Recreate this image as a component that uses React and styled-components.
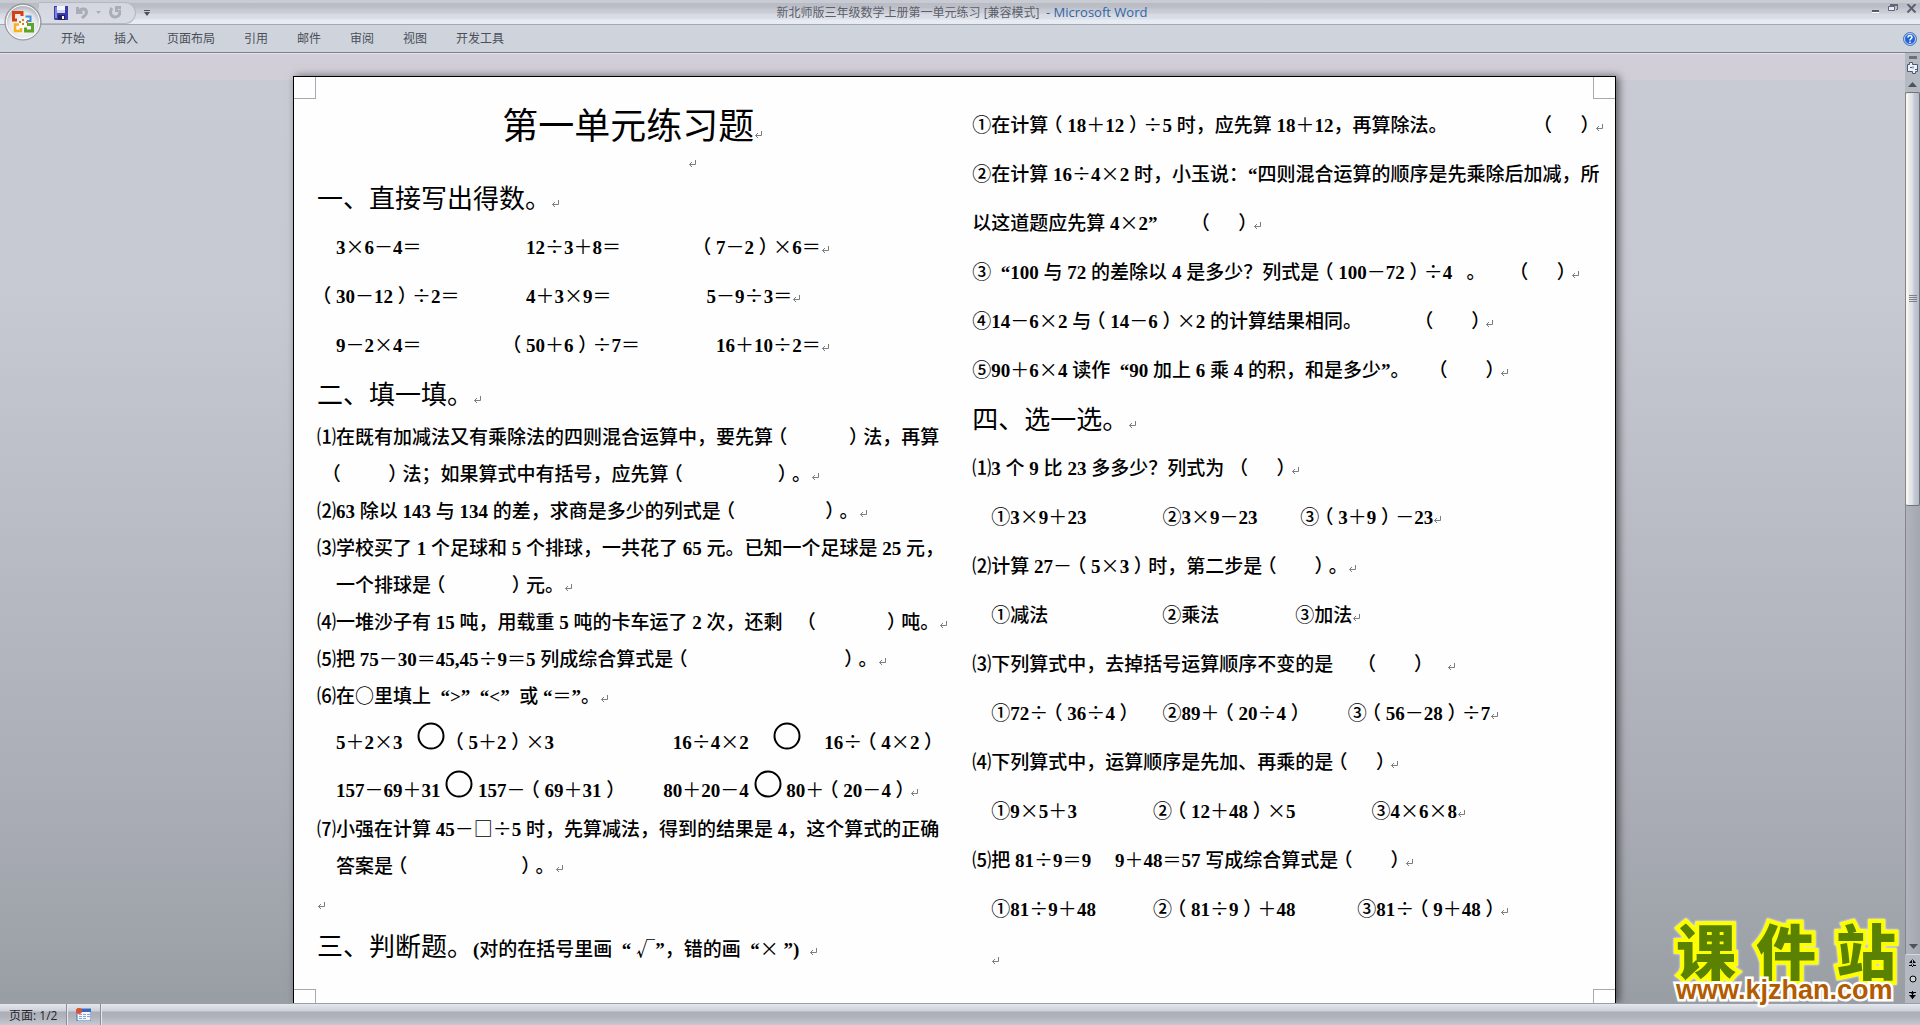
/**
*
* Word window with the maths worksheet
*
*/

import React from 'react';
import styled, { createGlobalStyle, css } from 'styled-components';

const cjk = '"Noto Sans CJK SC", sans-serif';
const latin = '"Liberation Serif", "Noto Sans CJK SC", serif';
const ui = '"Open Sans", "Noto Sans CJK SC", sans-serif';

const GlobalStyle = createGlobalStyle`
  *, *::before, *::after {
    box-sizing: border-box;
  }
  body {
    margin: 0;
    overflow: hidden;
  }
  button {
    padding: 0;
    border: 0;
    background: none;
    font: inherit;
    color: inherit;
  }
  svg {
    display: block;
  }
`

const Window = styled.div`
  position: relative;
  display: flex;
  flex-direction: column;
  height: 100vh;
  font-family: ${ui};
  font-size: 12px;
`

/* title bar and ribbon */

const TitleBar = styled.header`
  display: grid;
  grid-template-columns: 1fr auto 1fr;
  align-items: center;
  height: 25px;
  flex-shrink: 0;
  border-bottom: 1px solid #a4a9b3;
  background: linear-gradient(#c9cbd2 3px, #babcc5 3px, #bcbfc8 8px, #c5c8d0 9px, #cbced6 13px, #d6d9e0 14px, #dde0e7 19px, #e7ebf4 20px);
`

const QuickAccess = styled.div`
  display: flex;
  align-items: center;
  gap: 8px;
  height: 24px;
  padding-left: 39px;
`

const Pill = styled.div`
  display: flex;
  align-items: center;
  gap: 8px;
  height: 22px;
  width: 97px;
  padding-left: 15px;
  border: 1px solid #b4b8c2;
  border-left: 0;
  border-radius: 0 11px 11px 0;
  background: linear-gradient(#d3d6de, #d9dce4);
`

const WindowTitle = styled.div`
  padding-left: 4px;
  color: #5b5f6a;
  line-height: 24px;
  white-space: pre;
`

const AppName = styled.span`
  font-size: 13px;
  color: #2f66a6;
`

const WindowButtons = styled.div`
  display: flex;
  justify-content: flex-end;
  gap: 8px;
  padding-right: 3px;
  padding-bottom: 8px;
`

const Ribbon = styled.nav`
  display: flex;
  align-items: center;
  justify-content: space-between;
  height: 28px;
  flex-shrink: 0;
  padding: 0 3px 0 61px;
  border-bottom: 1px solid #7d8087;
  background: #cfd4dc;
`

const Tabs = styled.div`
  display: flex;
  gap: 29px;
`

const Tab = styled.button`
  line-height: 24px;
  color: #4a4e59;
`

const OfficeButton = styled.button`
  position: absolute;
  top: 3px;
  left: 4px;
`

/* document area */

const Body = styled.div`
  display: flex;
  flex: 1;
  min-height: 0;
`

const Workspace = styled.main`
  display: flex;
  justify-content: center;
  flex: 1;
  min-width: 0;
  padding: 23px 0 0 4px;
  overflow: hidden;
  background: linear-gradient(#e3e4e9 1px, #d1ced8 1px, #d1ced8 27px, #c8cbd3 27px, #c6c9d1 250px, #a9acb4 80%, #999ea4);
`

const Page = styled.article`
  position: relative;
  width: 100%;
  padding: 22px 13px 0 23px;
  overflow: hidden;
  border: 1px solid #000;
  border-bottom: 0;
  background: #fefefe;
`

const Shadow = styled.div`
  display: flex;
  width: min(1323px, 94%);
  box-shadow: 3px 0 8px rgba(0, 0, 0, 0.55);
`

const Corner = styled.i`
  position: absolute;
  width: 22px;
  height: ${p => p.$bottom ? '14px' : '22px'};
  border: 0 solid #a5a9b2;
  ${p => p.$bottom ? css`bottom: 0; border-top-width: 1px;` : css`top: 0; border-bottom-width: 1px;`}
  ${p => p.$right ? css`right: 0; border-left-width: 1px;` : css`left: 0; border-right-width: 1px;`}
`

const Columns = styled.div`
  display: grid;
  grid-template-columns: 1fr 1fr;
  gap: 24px;
`

const heights = {
  row: 49,
  ring: 48,
  tight: 37,
  blank: 24,
}

const Line = styled.p`
  margin: 0;
  height: ${p => heights[p.$kind || 'row']}px;
  line-height: ${p => p.$kind === 'ring' ? 56 : heights[p.$kind || 'row']}px;
  font-family: ${cjk};
  font-size: 19px;
  font-weight: 500;
  color: #000;
  white-space: pre;
  text-spacing-trim: space-all;
  text-align: ${p => p.$center ? 'center' : 'left'};
`

const Title = styled(Line).attrs({ as: 'h1' })`
  font-size: 36px;
  font-weight: 400;
  text-align: center;
`

const Heading = styled(Line).attrs({ as: 'h2' })`
  font-size: 26px;
  font-weight: 400;
`

const Note = styled.span`
  font-size: 19px;
  font-weight: 500;
`

const Latin = styled.span`
  font-family: ${latin};
  font-weight: 700;
`

const Sign = styled.span`
  font-weight: 400;
`

/* full width brackets are drawn in the middle of their cell */
const Bracket = styled.span`
  display: inline-block;
  width: 19px;
  text-align: center;
  font-feature-settings: "halt";
`

const Mark = styled.svg`
  display: inline-block;
  vertical-align: baseline;
`

const Ring = styled.svg`
  display: inline-block;
  vertical-align: -1px;
`

const Return = () => (
  <Mark width="9" height="8" viewBox="0 0 9 8" fill="none" stroke="#7d7d7d">
    <path d="M7.500 0v4.500H1.500M4 2L1.500 4.500 4 7" />
    <path d="M2.500 3.500v2" />
  </Mark>
)

const Circle = () => (
  <Ring width="28" height="28" viewBox="0 0 28 28">
    <circle cx="14" cy="14" r="12.500" fill="none" stroke="#000" strokeWidth="2" />
  </Ring>
)

const sp = n => ' '.repeat(n);

// digits and quotes use the serif face, ¶ is a return mark, @ is a ring
function Run({ text }) {
  return text.split(/([0-9,<>“”() ]+|[（）]|[＋－＝×÷]|[¶@])/).filter(Boolean).map((part, i) => {
    if (part === '¶') return <Return key={i} />;
    if (part === '@') return <Circle key={i} />;
    if (/^[（）]$/.test(part)) return <Bracket key={i}>{part}</Bracket>;
    if (/^[＋－＝×÷]$/.test(part)) return <Sign key={i}>{part}</Sign>;
    if (/^[0-9,<>“”() ]/.test(part)) return <Latin key={i}>{part}</Latin>;
    return part;
  });
}

const sums = [
  `${sp(4)}3×6－4＝${sp(22)}12÷3＋8＝${sp(16)}（7－2）×6＝¶`,
  `（30－12）÷2＝${sp(14)}4＋3×9＝${sp(20)}5－9÷3＝¶`,
  `${sp(4)}9－2×4＝${sp(18)}（50＋6）÷7＝${sp(16)}16＋10÷2＝¶`,
]

const fills = [
  `⑴在既有加减法又有乘除法的四则混合运算中，要先算（${sp(11)}）法，再算`,
  `${sp(2)}（${sp(8)}）法；如果算式中有括号，应先算（${sp(18)}）。¶`,
  `⑵63 除以 143 与 134 的差，求商是多少的列式是（${sp(17)}）。¶`,
  `⑶学校买了 1 个足球和 5 个排球，一共花了 65 元。已知一个足球是 25 元，`,
  `${sp(4)}一个排球是（${sp(12)}）元。¶`,
  `⑷一堆沙子有 15 吨，用载重 5 吨的卡车运了 2 次，还剩${sp(4)}（${sp(13)}）吨。¶`,
  `⑸把 75－30＝45,45÷9＝5 列成综合算式是（${sp(31)}）。¶`,
  `⑹在○里填上${sp(2)}“>”${sp(2)}“<”${sp(2)}或${sp(1)}“＝”。¶`,
]

const compares = [
  `${sp(4)}5＋2×3${sp(3)}@${sp(1)}（5＋2）×3${sp(25)}16÷4×2${sp(5)}@${sp(5)}16÷（4×2）`,
  `${sp(4)}157－69＋31${sp(1)}@${sp(1)}157－（69＋31）${sp(9)}80＋20－4${sp(1)}@${sp(1)}80＋（20－4）¶`,
]

const lastFill = [
  `⑺小强在计算 45－□÷5 时，先算减法，得到的结果是 4，这个算式的正确`,
  `${sp(4)}答案是（${sp(22)}）。¶`,
  `¶`,
]

const judges = [
  `①在计算（18＋12）÷5 时，应先算 18＋12，再算除法。${sp(19)}（${sp(4)}）¶`,
  `②在计算 16÷4×2 时，小玉说：“四则混合运算的顺序是先乘除后加减，所`,
  `以这道题应先算 4×2”${sp(8)}（${sp(4)}）¶`,
  `③${sp(2)}“100 与 72 的差除以 4 是多少？列式是（100－72）÷4${sp(3)}。${sp(6)}（${sp(4)}）¶`,
  `④14－6×2 与（14－6）×2 的计算结果相同。${sp(12)}（${sp(6)}）¶`,
  `⑤90＋6×4 读作${sp(2)}“90 加上 6 乘 4 的积，和是多少”。${sp(5)}（${sp(6)}）¶`,
]

const choices = [
  `⑴3 个 9 比 23 多多少？列式为${sp(2)}（${sp(4)}）¶`,
  `${sp(4)}①3×9＋23${sp(16)}②3×9－23${sp(9)}③（3＋9）－23¶`,
  `⑵计算 27－（5×3）时，第二步是（${sp(6)}）。¶`,
  `${sp(4)}①减法${sp(24)}②乘法${sp(16)}③加法¶`,
  `⑶下列算式中，去掉括号运算顺序不变的是${sp(6)}（${sp(6)}）${sp(4)}¶`,
  `${sp(4)}①72÷（36÷4）${sp(6)}②89＋（20÷4）${sp(9)}③（56－28）÷7¶`,
  `⑷下列算式中，运算顺序是先加、再乘的是（${sp(4)}）¶`,
  `${sp(4)}①9×5＋3${sp(16)}②（12＋48）×5${sp(16)}③4×6×8¶`,
  `⑸把 81÷9＝9${sp(5)}9＋48＝57 写成综合算式是（${sp(6)}）¶`,
  `${sp(4)}①81÷9＋48${sp(12)}②（81÷9）＋48${sp(13)}③81÷（9＋48）¶`,
  `${sp(4)}¶`,
]

const Lines = ({ items, kind }) => items.map((t, i) => (
  <Line key={i} $kind={kind}><Run text={t} /></Line>
))

function Worksheet() {
  return (
    <Columns lang="zh-CN">
      <section>
        <Title>第一单元练习题<Return /></Title>
        <Line $kind="blank" $center><Run text={`${sp(25)}¶`} /></Line>
        <Heading>一、直接写出得数。<Return /></Heading>
        <Lines items={sums} />
        <Heading>二、填一填。<Return /></Heading>
        <Lines items={fills} kind="tight" />
        <Lines items={compares} kind="ring" />
        <Lines items={lastFill} kind="tight" />
        <Heading>三、判断题。<Note><Run text={`(对的在括号里画${sp(2)}“ √”，错的画${sp(2)}“×${sp(1)}”)${sp(2)}¶`} /></Note></Heading>
      </section>
      <section>
        <Lines items={judges} />
        <Heading>四、选一选。<Return /></Heading>
        <Lines items={choices} />
      </section>
    </Columns>
  );
}

/* vertical scroll bar */

const Rail = styled.aside`
  display: flex;
  flex-direction: column;
  align-items: stretch;
  width: 15px;
  flex-shrink: 0;
  background: #b5b9c2;
`

const RailButton = styled.button`
  display: flex;
  align-items: center;
  justify-content: center;
  height: 16px;
  flex-shrink: 0;
`

const Split = styled.div`
  height: 3px;
  margin: 3px 3px 1px 4px;
  background: #6d7078;
`

const Track = styled.div`
  display: flex;
  flex-direction: column;
  flex: 1;
  border-left: 1px solid #83868e;
  border-bottom: 1px solid #d5d8de;
  background: linear-gradient(90deg, #b0b3bb, #a3a7af);
`

const Thumb = styled.div`
  display: flex;
  align-items: center;
  justify-content: center;
  height: 48%;
  border: 1px solid #70737b;
  border-left: 0;
  border-radius: 2px;
  background: linear-gradient(90deg, #fbf6ea 2px, #e6e7ed 3px, #e2e3ea 6px, #c6ccd6 8px, #b5bbc6);
`

const Spacer = styled.div`
  flex: 1;
`

const StatusBar = styled.footer`
  display: flex;
  height: 22px;
  flex-shrink: 0;
  border-top: 1px solid #9b9ea6;
  background: linear-gradient(#e4e7ed, #cdd0d8 7px, #abaeb7 8px, #b0b3bc 13px, #c6c9d1);
`

const StatusItem = styled.div`
  display: flex;
  align-items: center;
  padding: 0 9px;
  border-right: 1px solid #8b8e96;
  box-shadow: 1px 0 #e6e8ed;
  color: #24262b;
`

/* site stamp */

const Stamp = styled.div`
  position: absolute;
  right: 24px;
  bottom: 21px;
  width: 220px;
`

const StampName = styled.div`
  display: flex;
  justify-content: space-between;
  font-family: ${cjk};
  font-size: 60px;
  font-weight: 900;
  line-height: 54px;
  color: #5a8200;
  -webkit-text-stroke: 8px #fdff00;
  paint-order: stroke fill;
  filter: drop-shadow(0 0 1px #fff);
`

const StampUrl = styled.div`
  position: relative;
  font-family: "Liberation Sans", sans-serif;
  font-size: 27px;
  font-weight: 700;
  line-height: 28px;
  color: #b25b00;
  -webkit-text-stroke: 5px #fff;
  paint-order: stroke fill;
`

const OfficeLogo = () => (
  <svg width="38" height="38" viewBox="0 0 38 38">
    <defs>
      <radialGradient id="orb" cx="50%" cy="62%" r="55%">
        <stop offset="0" stopColor="#ffffff" />
        <stop offset="0.700" stopColor="#e4e6ea" />
        <stop offset="1" stopColor="#b3b6bd" />
      </radialGradient>
    </defs>
    <circle cx="19" cy="19" r="18" fill="url(#orb)" stroke="#8b8e95" />
    <circle cx="19" cy="19" r="16.500" fill="none" stroke="#fff" />
    <g fill="none" strokeWidth="3">
      <path d="M13 17H9.500V9.500H18V13" stroke="#d4400f" />
      <path d="M21.500 13.500H26.500V18H23" stroke="#3f8fd8" strokeWidth="2" />
      <path d="M15 21.500H11V28H17V25" stroke="#f5b21b" strokeWidth="2.500" />
      <path d="M23 21.500H28.500V28H21.500V24.500" stroke="#5fa32c" />
    </g>
    <path d="M18 16h2v2h-2zM18 20h2v2h-2zM15 18h2v2h-2zM22 18h2v2h-2z" fill="#e57a1b" />
  </svg>
)

const SaveIcon = () => (
  <svg width="14" height="14" viewBox="0 0 14 14">
    <path d="M0 0h14v14H1L0 13z" fill="#3a3cae" />
    <path d="M1 1h2v11H1z" fill="#7c86e0" />
    <path d="M3 0h8v7H3z" fill="#f3f5fc" />
    <path d="M3 4h8v3H3z" fill="#cfd6ef" />
    <path d="M4 9h7v5H4z" fill="#20225e" />
    <path d="M8 10h2v3H8z" fill="#fff" />
  </svg>
)

const UndoIcon = () => (
  <svg width="12" height="13" viewBox="0 0 12 13" fill="none" stroke="#a9adb8" strokeWidth="3">
    <path d="M1.500 1v5.500h5M2 6C5 2 10.500 2 10.500 6.500 10.500 9 8 10 6 12" />
  </svg>
)

const RedoIcon = () => (
  <svg width="12" height="13" viewBox="0 0 12 13" fill="none" stroke="#a9adb8" strokeWidth="3">
    <path d="M6 1.500H12M7.500 1v5M3 2C0 6 2 11 6 11s6-4 4-7" />
  </svg>
)

const Arrow = ({ up, color = '#4d525c', w = 9 }) => (
  <svg width={w} height="5" viewBox="0 0 9 5">
    <path d={up ? 'M4.500 0L9 5H0z' : 'M0 0h9L4.500 5z'} fill={color} />
  </svg>
)

const PageJump = ({ down }) => (
  <svg width="7" height="8" viewBox="0 0 7 8" fill="#000">
    <path d={down ? 'M0 1h7v1H5L3.500 4 2 2H0zM3 0h1v8H3zM0 4h7L3.500 8z' : 'M0 7h7V6H5L3.500 4 2 6H0zM3 0h1v8H3zM0 4h7L3.500 0z'} />
  </svg>
)

const tabs = ['开始', '插入', '页面布局', '引用', '邮件', '审阅', '视图', '开发工具'];

function App() {
  return (
    <Window>
      <GlobalStyle />
      <TitleBar>
        <QuickAccess>
          <Pill>
            <button aria-label="保存"><SaveIcon /></button>
            <button aria-label="撤消"><UndoIcon /></button>
            <Arrow w={5} color="#a9adb8" />
            <button aria-label="重复"><RedoIcon /></button>
          </Pill>
          <button aria-label="自定义快速访问工具栏">
            <svg width="6" height="6" viewBox="0 0 6 6"><path d="M0 0h6v1H0zM0 2h6L3 6z" fill="#4b4e57" /></svg>
          </button>
        </QuickAccess>
        <WindowTitle>新北师版三年级数学上册第一单元练习 [兼容模式] <AppName> - Microsoft Word</AppName></WindowTitle>
        <WindowButtons>
          <button aria-label="最小化">
            <svg width="9" height="9" viewBox="0 0 9 9"><path d="M1 6h7v2H1z" fill="#555a66" /><path d="M1 8h7v1H1z" fill="#fff" /></svg>
          </button>
          <button aria-label="还原">
            <svg width="10" height="9" viewBox="0 0 10 9" fill="none" stroke="#5f6675">
              <path d="M2.500 2V.5H9.500V5.500H8" />
              <path d="M.5 2.500h6v4h-6z" fill="#e8ebf3" />
              <path d="M2 1h8" strokeWidth="2" />
            </svg>
          </button>
          <button aria-label="关闭">
            <svg width="11" height="9" viewBox="0 0 11 9" fill="none" stroke="#5a606c" strokeWidth="2"><path d="M1.500 0l8 8.500M9.500 0l-8 8.500" /></svg>
          </button>
        </WindowButtons>
      </TitleBar>
      <Ribbon>
        <Tabs>{tabs.map(t => <Tab key={t}>{t}</Tab>)}</Tabs>
        <button aria-label="帮助">
          <svg width="14" height="14" viewBox="0 0 14 14">
            <circle cx="7" cy="7" r="6.500" fill="#2463d6" stroke="#5a7fb8" />
            <circle cx="7" cy="7" r="5.500" fill="none" stroke="#c3d8f8" />
            <path d="M5 5.500C5 3 9 3 9 5.300 9 6.800 7 6.500 7 8.500M7 9.500v1.500" fill="none" stroke="#fff" strokeWidth="1.500" />
          </svg>
        </button>
      </Ribbon>
      <OfficeButton aria-label="Office 按钮"><OfficeLogo /></OfficeButton>
      <Body>
        <Workspace>
          <Shadow>
            <Page>
              <Corner />
              <Corner $right />
              <Corner $bottom />
              <Corner $bottom $right />
              <Worksheet />
            </Page>
          </Shadow>
        </Workspace>
        <Rail>
          <Split />
          <RailButton aria-label="标尺">
            <svg width="13" height="12" viewBox="0 0 13 12" fill="#eef1f8" stroke="#4c5a78">
              <path d="M1.500 2.500h2v-2h3v2h5v7h-2v2h-3v-2h-5z" />
              <path d="M4 5.500h2M7 4.500v2M9 7.500h2" fill="none" />
            </svg>
          </RailButton>
          <RailButton aria-label="向上滚动"><Arrow up /></RailButton>
          <Track>
            <Thumb>
              <svg width="8" height="8" viewBox="0 0 8 8"><path d="M0 0h8v1H0zM0 2h8v1H0zM0 4h8v1H0zM0 6h8v1H0z" fill="#7c808a" /></svg>
            </Thumb>
            <Spacer />
            <RailButton aria-label="向下滚动"><Arrow /></RailButton>
          </Track>
          <RailButton aria-label="前一页"><PageJump /></RailButton>
          <RailButton aria-label="选择浏览对象">
            <svg width="8" height="8" viewBox="0 0 8 8"><circle cx="4" cy="4" r="3" fill="#cfd2d8" stroke="#000" /></svg>
          </RailButton>
          <RailButton aria-label="下一页"><PageJump down /></RailButton>
        </Rail>
      </Body>
      <StatusBar>
        <StatusItem>页面: 1/2</StatusItem>
        <StatusItem>
          <svg width="15" height="13" viewBox="0 0 15 13">
            <path d="M1 1h14v12H1z" fill="#f4f7fd" stroke="#4a6fb5" />
            <path d="M1 1h14v3H1z" fill="#3566c0" />
            <path d="M3 6h3v1H3zM7 6h3v1H7zM11 6h3v1h-3zM3 8h3v1H3zM7 8h3v1H7zM11 8h3v1h-3zM3 10h3v1H3zM7 10h3v1H7z" fill="#8ba3d0" />
            <circle cx="3" cy="3" r="3" fill="#d9532c" />
          </svg>
        </StatusItem>
      </StatusBar>
      <Stamp>
        <StampName><span>课</span><span>件</span><span>站</span></StampName>
        <StampUrl>www.kjzhan.com</StampUrl>
      </Stamp>
    </Window>
  );
}

export default App;
